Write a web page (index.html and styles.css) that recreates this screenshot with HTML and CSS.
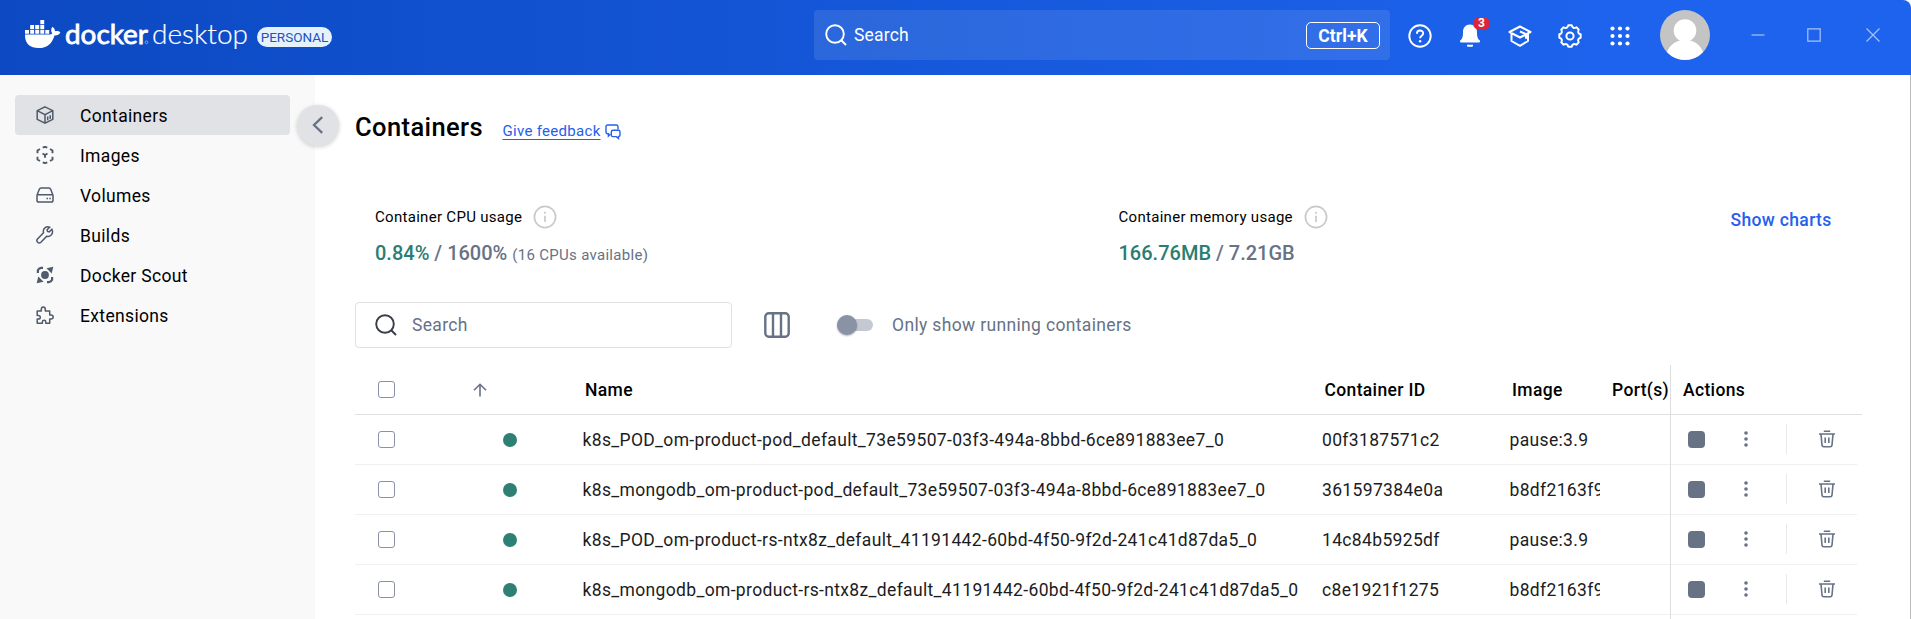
FILE: index.html
```html
<!DOCTYPE html>
<html lang="en">
<head>
<meta charset="utf-8">
<title>Docker Desktop</title>
<link rel="stylesheet" href="styles.css">
</head>
<body>
<svg width="0" height="0" class="sprite">
  <symbol id="trash" viewBox="0 0 18 18"><path d="M5.800 1.200h6.400M1 4h16M3 4l1 11.200q.2 1.600 1.700 1.600h6.600q1.500 0 1.700-1.600L15 4M7.200 7.500v5.500M10.800 7.500v5.500" fill="none" stroke="currentColor" stroke-width="1.600"/></symbol>
  <symbol id="more" viewBox="0 0 6 18"><circle cx="3" cy="3" r="1.800"/><circle cx="3" cy="9" r="1.800"/><circle cx="3" cy="15" r="1.800"/></symbol>
  <symbol id="info" viewBox="0 0 24 24"><circle cx="12" cy="12" r="10.600" fill="none" stroke="currentColor" stroke-width="1.700"/><path d="M12 10.800v6.200M12 6.800v2" fill="none" stroke="currentColor" stroke-width="1.700"/></symbol>
  <symbol id="magnifier" viewBox="0 0 22 22"><g fill="none" stroke="currentColor" stroke-width="1.900"><circle cx="10" cy="10" r="8.800"/><path d="M16 16l5 5"/></g></symbol>
</svg>
<header class="topbar">
  <div class="brand">
    <svg class="whale" viewBox="0 0 36 28" fill="#fff"><path d="M15.300 0h3.900v4.200h-3.900zM5.200 5h3.900v4.200H5.200zM10.200 5h4v4.200h-4zM15.300 5h3.900v4.200h-3.900zM0 10.100h4v3.600H0zM5.200 10.100h3.900v3.600H5.200zM10.200 10.100h4v3.600h-4zM15.300 10.100h3.900v3.600h-3.900zM20.300 10.100h3.900v3.600h-3.900z"/><path d="M0 14.500h24.500q2.200 0 2.700-1c-1.600-2.500-1.300-4.700.2-6.800 1.800 1.200 2.700 2.800 2.500 4.500 2-.4 4-.2 5.500 1-1.100 2.300-3 3.300-5.900 3.200C27.200 23.300 22.500 28 13.500 28 4.800 28-.3 23.400 0 14.500z"/></svg>
    <svg class="wordmark" viewBox="0 0 184 36"><text x="0" y="26" class="wm-docker" textLength="83" lengthAdjust="spacingAndGlyphs">docker</text><text x="87" y="26" class="wm-desktop" textLength="96" lengthAdjust="spacingAndGlyphs">desktop</text><circle cx="81.500" cy="24.300" r="1.400" fill="none" stroke="#fff" stroke-width=".6" opacity=".7"/></svg>
    <span class="plan">PERSONAL</span>
  </div>
  <div class="global-search"><svg class="gs-icon"><use href="#magnifier"/></svg><span>Search</span><kbd>Ctrl+K</kbd></div>
  <nav class="tools">
    <svg class="tool" viewBox="0 0 24 24"><g fill="none" stroke="#fff" stroke-width="1.900"><circle cx="12" cy="12" r="10.700"/><path d="M8.900 9.700c0-4.200 6.300-4.200 6.300-.4 0 2.500-3.100 2.400-3.100 5"/></g><circle cx="12.100" cy="17.300" r="1.200" fill="#fff"/></svg>
    <span class="bell"><svg class="tool" viewBox="0 0 24 24" fill="#fff"><path d="M12 .5c4.500 0 7 3.300 7 7.500 0 5 .6 6.500 2.600 8.300.9.900.5 2.200-.8 2.200H3.200c-1.300 0-1.700-1.300-.8-2.200C4.400 14.500 5 13 5 8 5 3.800 7.500.5 12 .5zM9 20.700h6v1.100q0 1-1 1h-4q-1 0-1-1z"/></svg><b>3</b></span>
    <svg class="tool" viewBox="0 0 24 24" fill="none" stroke="#fff" stroke-width="2" stroke-linejoin="round"><path d="M1.500 8L12 2.500 22.500 8 12 13.500zM3.500 9.500v7.500L12 21.800l8-4.800V9.500M12 7.500l6 2.700v4.500"/></svg>
    <svg class="tool" viewBox="0 0 24 24" fill="none" stroke="#fff" stroke-width="2" stroke-linejoin="round"><circle cx="12" cy="12" r="3.600"/><path d="M10.310 1.330L13.690 1.330Q14.830 5.160 18.350 3.260L20.740 5.650Q18.840 9.170 22.670 10.310L22.670 13.690Q18.840 14.830 20.740 18.350L18.350 20.740Q14.830 18.840 13.690 22.670L10.310 22.670Q9.170 18.840 5.650 20.740L3.260 18.350Q5.160 14.830 1.330 13.690L1.330 10.310Q5.160 9.170 3.260 5.650L5.650 3.260Q9.170 5.160 10.310 1.330Z"/></svg>
    <svg class="tool" viewBox="0 0 24 24" fill="#fff"><circle cx="4.500" cy="4.500" r="2.100"/><circle cx="12" cy="4.500" r="2.100"/><circle cx="19.500" cy="4.500" r="2.100"/><circle cx="4.500" cy="12" r="2.100"/><circle cx="12" cy="12" r="2.100"/><circle cx="19.500" cy="12" r="2.100"/><circle cx="4.500" cy="19.500" r="2.100"/><circle cx="12" cy="19.500" r="2.100"/><circle cx="19.500" cy="19.500" r="2.100"/></svg>
  </nav>
  <svg class="avatar" viewBox="0 0 50 50"><circle cx="25" cy="25" r="25" fill="#c4c4c4"/><circle cx="25" cy="20.500" r="11.300" fill="#fff"/><path d="M7 42Q12 30 25 30T43 42Q35.500 50 25 50T7 42z" fill="#fff"/></svg>
  <div class="window-buttons">
    <svg viewBox="0 0 14 14"><path d="M.5 7h13"/></svg>
    <svg viewBox="0 0 14 14"><path d="M.8.800h12.400v12.400H.8z"/></svg>
    <svg viewBox="0 0 14 14"><path d="M.5.500l13 13M13.500.500l-13 13"/></svg>
  </div>
</header>
<div class="body">
  <aside class="sidebar">
    <a class="nav-item active"><svg viewBox="0 0 18 18"><path d="M9 .9l7.800 3.800v8.600L9 17.100l-7.800-3.800V4.700zM1.200 4.700L9 8.600l7.800-3.900M9 8.600v8.500M11.700 10.500v3.800M14.200 9.300v3.800"/></svg><span>Containers</span></a>
    <a class="nav-item"><svg viewBox="0 0 18 18"><path d="M6.700 1.700L9 .8l2.300.9M14 3l2.500 1.500v2.700M16.500 10.800v2.700L14 15M11.300 16.400L9 17.200l-2.300-.8M4 15l-2.500-1.500v-2.700M1.500 7.200V4.500L4 3M6.500 7.500L9 9l2.500-1.500M9 9v2.800" stroke-width="1.900"/></svg><span>Images</span></a>
    <a class="nav-item"><svg viewBox="0 0 18 18"><path d="M1 9.300L3.300 3.200q.5-1.300 1.900-1.300h7.600q1.400 0 1.900 1.300L17 9.300v4.900q0 1.900-1.900 1.900H2.900Q1 16.100 1 14.200zM1.300 8.700h15.400M10.500 12.400h1.500M13.300 12.400h1.500"/></svg><span>Volumes</span></a>
    <a class="nav-item"><svg viewBox="0 0 18 18"><path d="M15.900 3.200l-2.700 2.700-1.700-.5-.4-1.700 2.500-2.500C10.300-.1 6.400 2.600 7.500 6.700L1.500 13c-2 2.200 1.300 5.300 3.400 3.300l5.900-6.100c4 1.200 7-3 5.100-7z"/></svg><span>Builds</span></a>
    <a class="nav-item"><svg viewBox="0 0 18 18"><circle cx="9" cy="9" r="3.900" fill="#4f5a6b" stroke="none"/><path d="M10.500 2.300L17.300.700l-1.600 6.800zM7.500 15.700L.7 17.300l1.600-6.800z" fill="#4f5a6b" stroke="none"/><path d="M1.900 7V4.200Q2.800 2.200 5 1.900h2M16.100 11v2.800Q15.200 15.800 13 16.100h-2" stroke-width="2.200"/></svg><span>Docker Scout</span></a>
    <a class="nav-item"><svg viewBox="0 0 18 18"><path d="M1.200 5h4.100V3.200c0-3 4-3 4 0V5h4.400v3.900h1.200c3 0 3 4 0 4h-1.200v4.300h-3.900v-1.300c0-2.300-3.400-2.300-3.400 0v1.300H1.200v-4.100h1.200c2.500 0 2.500-3.700 0-3.700H1.200z" stroke-linejoin="round"/></svg><span>Extensions</span></a>
    <button class="collapse"><svg viewBox="0 0 12 18"><path d="M10.200 1.200L2 9l8.200 7.800"/></svg></button>
  </aside>
  <main class="main">
    <div class="title-row"><h1>Containers</h1><a class="feedback">Give feedback</a><svg class="chat" viewBox="0 0 16 16"><path d="M5.300 10.200L3.400 12v-2.200H2.700Q1 9.800 1 8V2.700Q1 1 2.700 1h8.600Q13 1 13 2.700v2.500M8 6.200h5.300q1.700 0 1.700 1.700v3q0 1.600-1.500 1.600v2L11.300 12.600H8q-1.700 0-1.700-1.700v-3q0-1.700 1.700-1.700z"/></svg></div>
    <section class="usage">
      <div class="metric cpu"><div class="metric-label">Container CPU usage<svg><use href="#info"/></svg></div><div class="metric-value"><b>0.84%</b> / 1600% <small>(16 CPUs available)</small></div></div>
      <div class="metric memory"><div class="metric-label">Container memory usage<svg><use href="#info"/></svg></div><div class="metric-value"><b>166.76MB</b> / 7.21GB</div></div>
      <a class="charts">Show charts</a>
    </section>
    <div class="filters">
      <div class="search"><svg><use href="#magnifier"/></svg><span>Search</span></div>
      <svg class="columns" viewBox="0 0 26 26"><rect x="1.300" y="1.300" width="23.400" height="23.400" rx="3.500"/><path d="M9 1.300v23.400M17 1.300v23.400"/></svg>
      <span class="switch"><i></i></span>
      <span class="switch-label">Only show running containers</span>
    </div>
    <div class="table">
      <div class="row head"><span class="check"></span><svg class="arrow" viewBox="0 0 14 14"><path d="M7 13.500V1.500M1 7.300l6-6 6 6"/></svg><span class="cell">Name</span><span class="cell">Container ID</span><span class="cell">Image</span><span class="cell">Port(s)</span><span class="actions-head">Actions</span></div>
      <div class="row"><span class="check"></span><span class="dot"></span><span class="cell">k8s_POD_om-product-pod_default_73e59507-03f3-494a-8bbd-6ce891883ee7_0</span><span class="cell">00f3187571c2</span><span class="cell image">pause:3.9</span><span></span><span class="actions"><i class="stop"></i><svg class="more"><use href="#more"/></svg><i class="sep"></i><svg class="trash"><use href="#trash"/></svg></span></div>
      <div class="row"><span class="check"></span><span class="dot"></span><span class="cell">k8s_mongodb_om-product-pod_default_73e59507-03f3-494a-8bbd-6ce891883ee7_0</span><span class="cell">361597384e0a</span><span class="cell image">b8df2163f9</span><span></span><span class="actions"><i class="stop"></i><svg class="more"><use href="#more"/></svg><i class="sep"></i><svg class="trash"><use href="#trash"/></svg></span></div>
      <div class="row"><span class="check"></span><span class="dot"></span><span class="cell">k8s_POD_om-product-rs-ntx8z_default_41191442-60bd-4f50-9f2d-241c41d87da5_0</span><span class="cell">14c84b5925df</span><span class="cell image">pause:3.9</span><span></span><span class="actions"><i class="stop"></i><svg class="more"><use href="#more"/></svg><i class="sep"></i><svg class="trash"><use href="#trash"/></svg></span></div>
      <div class="row"><span class="check"></span><span class="dot"></span><span class="cell">k8s_mongodb_om-product-rs-ntx8z_default_41191442-60bd-4f50-9f2d-241c41d87da5_0</span><span class="cell">c8e1921f1275</span><span class="cell image">b8df2163f9</span><span></span><span class="actions"><i class="stop"></i><svg class="more"><use href="#more"/></svg><i class="sep"></i><svg class="trash"><use href="#trash"/></svg></span></div>
      <div class="tail"></div>
    </div>
  </main>
</div>
</body>
</html>
```
FILE: styles.css
```css
* { box-sizing: border-box; }
body { margin: 0; height: 619px; overflow: hidden; background: #fff; color: #000; font: 17.5px/24px Roboto, "Liberation Sans", sans-serif; letter-spacing: .345px; }
svg { display: block; flex: none; }
.sprite { position: absolute; }

/* Title bar */
.topbar { height: 75px; display: flex; align-items: flex-start; color: #fff; background: linear-gradient(90deg, #0c49c2, #1d63ed 85%); border-top-right-radius: 8px; }
.brand { display: flex; width: 814px; padding-left: 25px; }
.whale { width: 36px; height: 28px; margin-top: 20px; }
.wordmark { width: 184px; height: 36px; margin: 18px 0 0 4px; overflow: visible; }
.wordmark text { font-family: Lato, sans-serif; font-size: 27px; fill: #fff; letter-spacing: 0; }
.wordmark .wm-docker { stroke: #fff; stroke-width: .8px; }
.wordmark .wm-desktop { font-weight: 300; stroke: #fff; stroke-width: .2px; }
.plan { width: 75px; height: 20px; margin: 27px 0 0 8px; border-radius: 10px; background: #e5f2fc; color: #1d55c0; font-size: 13.5px; font-weight: 400; line-height: 20px; text-align: center; letter-spacing: 0; }
.global-search { width: 576px; height: 50px; margin-top: 10px; padding: 0 10px 0 11px; border-radius: 4px; background: rgba(255,255,255,.1); display: flex; align-items: center; }
.gs-icon { width: 22px; height: 22px; margin-right: 7px; }
.global-search span { line-height: 50px; letter-spacing: .2px; }
kbd { margin-left: auto; width: 74px; height: 27px; border: 1px solid #fff; border-radius: 5px; font: bold 17.5px/26px Roboto, sans-serif; text-align: center; letter-spacing: .1px; }
.tools { display: flex; gap: 26px; margin: 23.500px 0 0 17.500px; }
.tool { width: 24px; height: 24px; }
.bell { position: relative; }
.bell b { position: absolute; left: 15.500px; top: -7px; width: 17px; height: 13px; border-radius: 7px; background: #d9263b; font-size: 12px; line-height: 13px; text-align: center; letter-spacing: 0; }
.avatar { width: 50px; height: 50px; margin: 10px 0 0 28.500px; }
.window-buttons { display: flex; gap: 43.500px; margin: 28px 0 0 40.500px; }
.window-buttons svg { width: 14px; height: 14px; fill: none; stroke: #a9c3f8; stroke-width: 1.200; }
.window-buttons svg:nth-child(2) { margin: 0 1.500px 0 -1.500px; }

.body { display: flex; height: 544px; border-right: 1px solid #bcbcbc; }

/* Navigation */
.sidebar { position: relative; flex: none; width: 315px; padding: 20px 25px 0 15px; background: #f9f9fa; }
.nav-item { display: flex; align-items: center; height: 40px; padding-left: 21px; gap: 26px; border-radius: 4px; }
.nav-item span { padding-top: 2px; }
.nav-item.active { background: #e1e2e6; }
.nav-item svg { width: 18px; height: 18px; fill: none; stroke: #4f5a6b; stroke-width: 1.500; }
.collapse { position: absolute; left: 297px; top: 29.500px; width: 41.500px; height: 41.500px; padding: 0 0 1px 0; border: 0; border-radius: 50%; background: #e1e2e6; box-shadow: 0 1px 4px rgba(0,0,0,.18); display: flex; align-items: center; justify-content: center; }
.collapse svg { width: 12px; height: 18px; fill: none; stroke: #677285; stroke-width: 2.300; }

.main { flex: 1; padding: 35px 48px 0 40px; min-width: 0; }
.title-row { display: flex; height: 34px; }
h1 { width: 147.500px; margin: 0; font-size: 25.5px; line-height: 34px; font-weight: 500; letter-spacing: .4px; }
.feedback { width: 102.500px; padding-top: 9px; font-size: 15px; line-height: 24px; letter-spacing: .3px; white-space: nowrap; color: #2560ed; text-decoration: underline; text-underline-offset: 3px; }
.chat { width: 16px; height: 16px; margin-top: 14px; fill: none; stroke: #2560ed; stroke-width: 1.400; }

/* Resource usage */
.usage { display: flex; padding: 61px 0 0 20px; height: 158px; }
.cpu { width: 743.500px; }
.memory { width: 612px; }
.metric-label { display: flex; align-items: center; height: 24px; gap: 11px; font-size: 15px; letter-spacing: .3px; }
.metric-label svg { width: 24px; height: 24px; color: #c9c9cb; }
.metric-value { margin-top: 11px; font-size: 20px; font-weight: 500; line-height: 26px; letter-spacing: 0; color: #677285; }
.metric-value b { font-weight: 500; color: #2a7d70; }
.metric-value small { font-size: 15px; font-weight: 400; letter-spacing: .3px; }
.charts { padding-top: 3px; font-weight: 500; color: #2560ed; }

/* Filters */
.filters { display: flex; align-items: center; height: 46px; color: #677285; }
.search { display: flex; align-items: center; width: 377px; height: 46px; padding-left: 18.500px; gap: 15.500px; border: 1px solid #dfe0e3; border-radius: 4px; }
.search svg { width: 22px; height: 22px; color: #393f49; }
.columns { width: 26px; height: 26px; margin-left: 32px; fill: none; stroke: #677285; stroke-width: 2.400; }
.switch { width: 36px; height: 12px; margin-left: 47px; border-radius: 6px; background: #c4c8d1; position: relative; }
.switch i { position: absolute; left: 0; top: -4px; width: 20px; height: 20px; border-radius: 50%; background: #8993a5; box-shadow: 0 1px 2px rgba(0,0,0,.3); }
.switch-label { margin-left: 19px; }

/* Containers table */
.table { width: 1507px; margin-top: 17px; }
.row { display: grid; grid-template-columns: 119px 108.500px 739.500px 187.500px 90.500px 70px 187px; align-items: center; width: 1502px; height: 50px; border-bottom: 1px solid #f0f0f1; white-space: nowrap; color: #1b1c1e; }
.row.head { grid-template-columns: 118px 112px 739.500px 187.500px 100px 58px 192px; width: 1507px; border-color: #dfe0e1; font-weight: 500; color: #000; }
.row > :nth-child(7) { align-self: stretch; border-left: 1px solid #dcdde0; height: 50px; }
.check { width: 17px; height: 17px; margin: 0 0 2px 22.500px; border: 1.500px solid #8993a5; border-radius: 3px; }
.arrow { width: 14px; height: 14px; fill: none; stroke: #677285; stroke-width: 1.600; }
.dot { width: 14px; height: 14px; margin: 0 0 1px 29px; border-radius: 50%; background: #2e7f74; }
.image { overflow: hidden; }
.actions-head { padding-left: 12px; line-height: 50px; }
.actions { display: flex; align-items: center; padding-bottom: 2px; color: #677285; }
.stop { width: 17px; height: 17px; margin-left: 16.500px; border-radius: 4px; background: #677285; }
.more { width: 6px; height: 18px; margin-left: 38.500px; fill: #677285; }
.sep { width: 1px; height: 30px; margin-left: 37px; background: #e8e9eb; }
.trash { width: 18px; height: 18px; margin-left: 31px; }
.tail { height: 5px; width: 1px; margin-left: 1315px; background: #dcdde0; }
```
